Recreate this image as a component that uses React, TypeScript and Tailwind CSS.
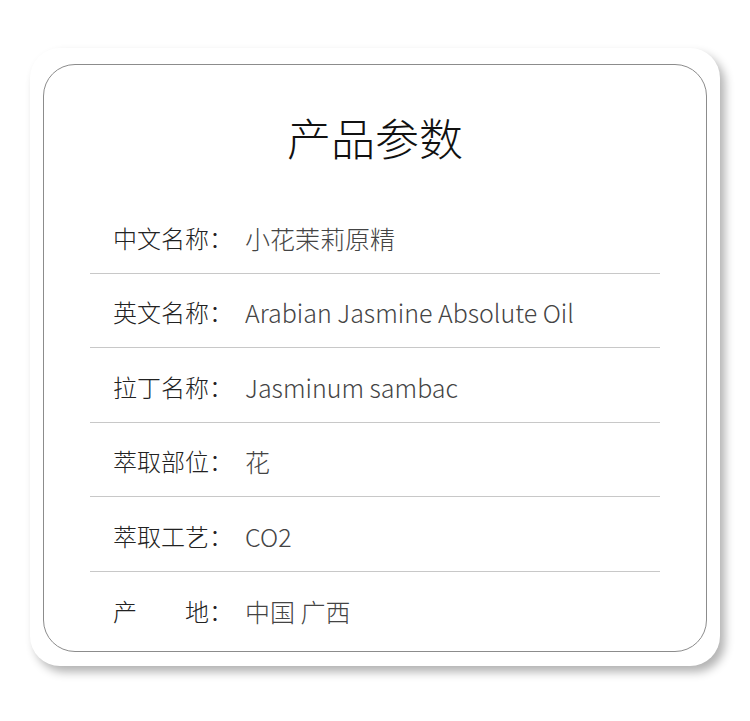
import React from 'react';

const rows: { label: React.ReactNode; value: string }[] = [
  { label: '中文名称：', value: '小花茉莉原精' },
  { label: '英文名称：', value: 'Arabian Jasmine Absolute Oil' },
  { label: '拉丁名称：', value: 'Jasminum sambac' },
  { label: '萃取部位：', value: '花' },
  { label: '萃取工艺：', value: 'CO2' },
  {
    label: (
      <span className="flex w-full justify-between">
        <span>产</span>
        <span>地：</span>
      </span>
    ),
    value: '中国 广西',
  },
];

export default function App() {
  return (
    <div
      className="min-h-screen bg-white pt-[48px] pl-[30px]"
      style={{ fontFamily: '"Noto Sans CJK SC", "Noto Sans", sans-serif' }}
    >
      <div className="w-[690px] h-[618px] rounded-[30px] bg-white shadow-[5px_6px_10px_rgba(0,0,0,0.3)] pt-[16px] px-[13px] pb-[14px]">
        <div className="h-full rounded-[32px] border border-[#8c8c8c] pt-[50px]">
          <h1 className="text-center text-[44px] leading-[44px] font-light text-[#111]">产品参数</h1>

          <div className="mx-[46px] mt-[40px]">
            {rows.map((row, i) => (
              <div
                key={i}
                className={
                  'flex h-[74.5px] items-center pl-[23px] pt-[4px] leading-[24px] ' +
                  (i < rows.length - 1 ? 'border-b border-[#c8c8c8]' : '')
                }
              >
                <span className="flex w-[120px] shrink-0 text-[24px] font-light text-[#222]">{row.label}</span>
                <span className="ml-[12px] text-[25px] font-extralight text-[#444]">{row.value}</span>
              </div>
            ))}
          </div>
        </div>
      </div>
    </div>
  );
}
